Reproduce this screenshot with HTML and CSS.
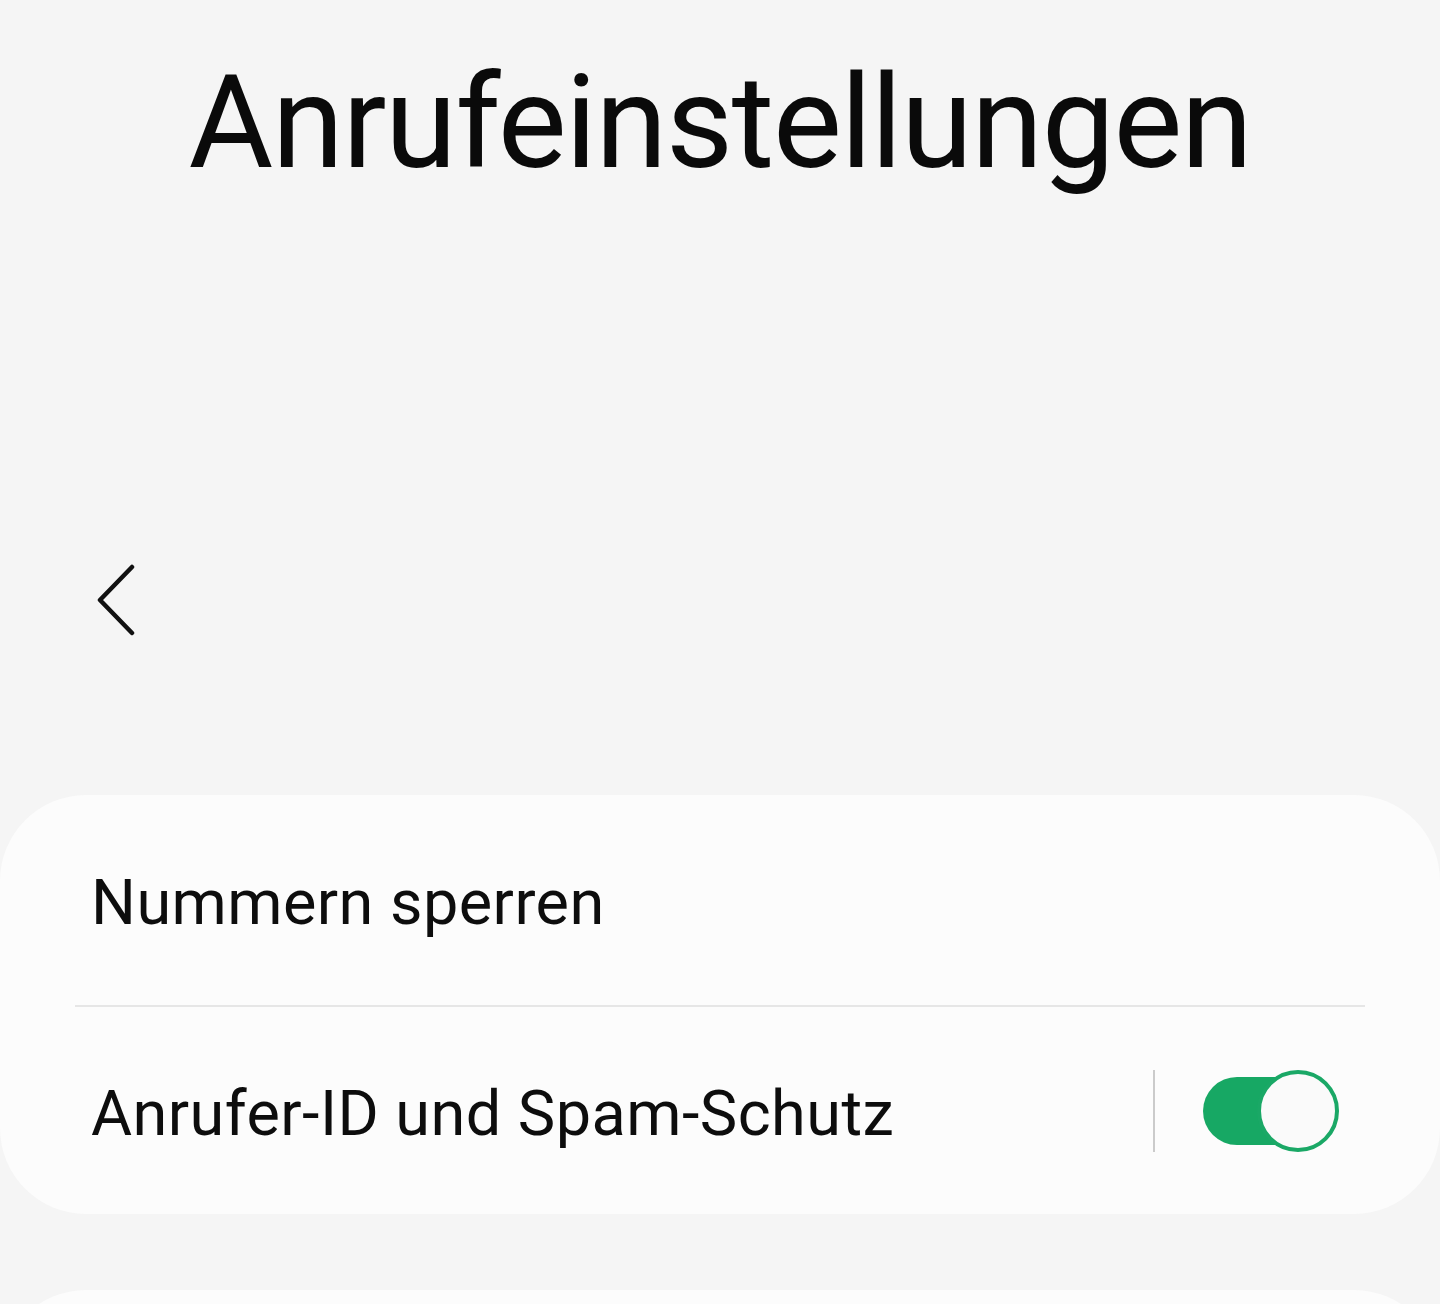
FILE: index.html
```html
<!DOCTYPE html>
<html lang="de">
<head>
<meta charset="utf-8">
<title>Anrufeinstellungen</title>
<link rel="stylesheet" href="styles.css">
</head>
<body>
<div class="page">
  <header class="header">
    <h1 class="title">Anrufeinstellungen</h1>
    <div class="toolbar">
      <button class="back" aria-label="Zurück">
        <svg width="40" height="72" viewBox="0 0 40 72" aria-hidden="true">
          <path d="M36 3 L4 36 L36 69" fill="none" stroke="#111" stroke-width="4.5" stroke-linecap="round" stroke-linejoin="round"/>
        </svg>
      </button>
    </div>
  </header>
  <section class="card">
    <div class="row row-first">
      <span class="label">Nummern sperren</span>
    </div>
    <div class="divider"></div>
    <div class="row row-switch">
      <span class="label label-switch">Anrufer-ID und Spam-Schutz</span>
      <div class="switch-area">
        <span class="vline"></span>
        <span class="toggle">
          <span class="track"></span>
          <span class="thumb"></span>
        </span>
      </div>
    </div>
  </section>
  <section class="card card-next"></section>
</div>
</body>
</html>
```
FILE: styles.css
```css
* { box-sizing: border-box; }
html, body {
  margin: 0;
  padding: 0;
  background: #f5f5f5;
}
body {
  font-family: Roboto, "Noto Sans", "Liberation Sans", sans-serif;
  color: #0d0d0d;
}
.page {
  width: 1440px;
  height: 1304px;
  overflow: hidden;
  display: flex;
  flex-direction: column;
}
.header {
  display: flex;
  flex-direction: column;
  flex-shrink: 0;
}
.title {
  margin: 0;
  padding-top: 45px;
  font-size: 130px;
  line-height: 156px;
  font-weight: 400;
  letter-spacing: -1.35px;
  text-align: center;
  color: #0a0a0a;
}
.toolbar {
  margin-top: 339px;
  height: 120px;
  display: flex;
  align-items: center;
  padding-left: 96px;
}
.back {
  background: none;
  border: 0;
  padding: 0;
  margin: 0;
  display: flex;
  width: 40px;
  height: 72px;
}
.card {
  margin-top: 135px;
  background: #fcfcfc;
  border-radius: 86px;
  display: flex;
  flex-direction: column;
  flex-shrink: 0;
}
.row {
  display: flex;
  align-items: center;
  padding-left: 91px;
  font-size: 63px;
  letter-spacing: 0.45px;
}
.label {
  line-height: 74px;
}
.row-first {
  padding-top: 71px;
  padding-bottom: 65px;
}
.divider {
  height: 2px;
  margin: 0 75px;
  background: #e6e6e6;
}
.row-switch {
  height: 207px;
  padding-right: 101px;
  justify-content: space-between;
}
.label-switch {
  padding-top: 7px;
}
.switch-area {
  display: flex;
  align-items: center;
  gap: 48px;
}
.vline {
  width: 2px;
  height: 82px;
  background: #cbcbcb;
}
.toggle {
  position: relative;
  width: 136px;
  height: 82px;
}
.track {
  position: absolute;
  left: 0;
  top: 7px;
  width: 112px;
  height: 68px;
  border-radius: 34px;
  background: #17a864;
}
.thumb {
  position: absolute;
  right: 0;
  top: 0;
  width: 82px;
  height: 82px;
  border-radius: 50%;
  background: #fafafa;
  border: 4px solid #1aa866;
}
.card-next {
  margin-top: 76px;
  height: 200px;
}
```
